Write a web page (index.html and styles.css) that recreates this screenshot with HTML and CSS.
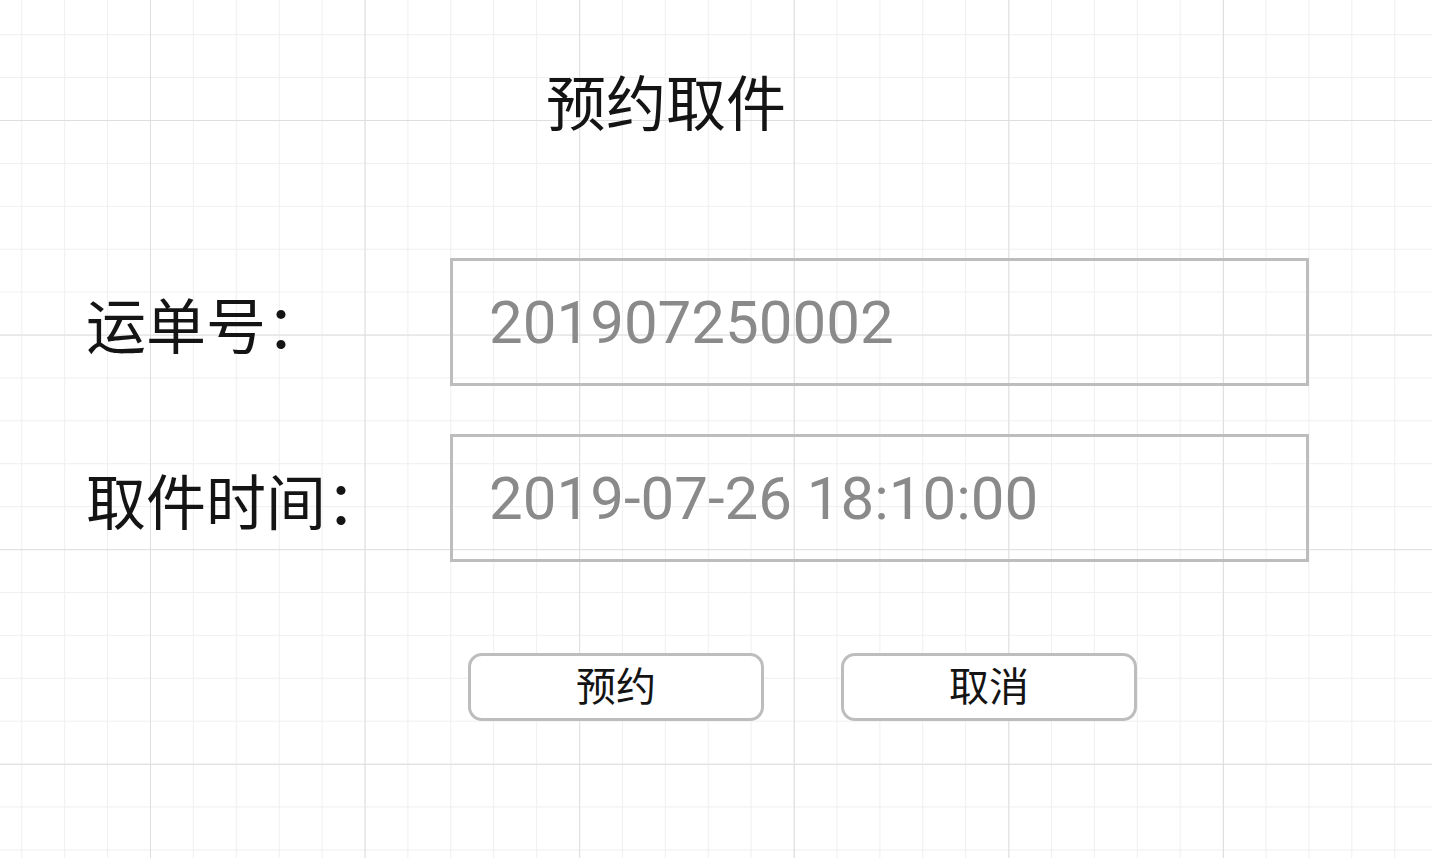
FILE: index.html
```html
<!DOCTYPE html>
<html lang="zh-CN">
<head>
<meta charset="utf-8">
<title>预约取件</title>
<link rel="stylesheet" href="styles.css">
</head>
<body>
<main class="sheet">
  <h1 class="title">预约取件</h1>
  <div class="form">
    <div class="row">
      <span class="label">运单号：</span>
      <div class="field">201907250002</div>
    </div>
    <div class="row">
      <span class="label">取件时间：</span>
      <div class="field">2019-07-26 18:10:00</div>
    </div>
  </div>
  <div class="actions">
    <button class="btn" type="button">预约</button>
    <button class="btn" type="button">取消</button>
  </div>
</main>
</body>
</html>
```
FILE: styles.css
```css
html {
  height: 100%;
  background-color: #ffffff;
  background-image:
    linear-gradient(to right, #dedede 1px, transparent 1px),
    linear-gradient(to bottom, #dedede 1px, transparent 1px),
    linear-gradient(to right, #efefef 1px, transparent 1px),
    linear-gradient(to bottom, #efefef 1px, transparent 1px);
  background-size:
    214.6px 214.6px,
    214.6px 214.6px,
    42.92px 42.92px,
    42.92px 42.92px;
  background-position:
    150px 0,
    0 120px,
    21.24px 0,
    0 34.16px;
}

body {
  margin: 0;
  font-family: "Noto Sans CJK SC", "Noto Sans", sans-serif;
  color: #141414;
}

.sheet {
  display: flex;
  flex-direction: column;
  padding: 70px 0 0 86px;
}

.title {
  margin: 0 0 0 460px;
  font-size: 60px;
  font-weight: 400;
  line-height: 60px;
}

.form {
  display: flex;
  flex-direction: column;
  gap: 48px;
  margin-top: 128px;
}

.row {
  display: flex;
  align-items: center;
}

.label {
  width: 364px;
  font-size: 60px;
  line-height: 60px;
  padding-top: 2px;
}

.field {
  box-sizing: border-box;
  width: 859px;
  height: 128px;
  border: 3px solid #bdbdbd;
  display: flex;
  align-items: center;
  padding-left: 36px;
  font-family: Roboto, "Liberation Sans", sans-serif;
  font-size: 60px;
  color: #8a8a8a;
}

.actions {
  display: flex;
  gap: 77px;
  margin: 91px 0 0 382px;
}

.btn {
  box-sizing: border-box;
  width: 296px;
  height: 68px;
  border: 3px solid #bdbdbd;
  border-radius: 14px;
  background: #ffffff;
  font-family: "Noto Sans CJK SC", sans-serif;
  font-size: 40px;
  line-height: 1;
  color: #141414;
  padding: 0 0 7px 0;
}
```
